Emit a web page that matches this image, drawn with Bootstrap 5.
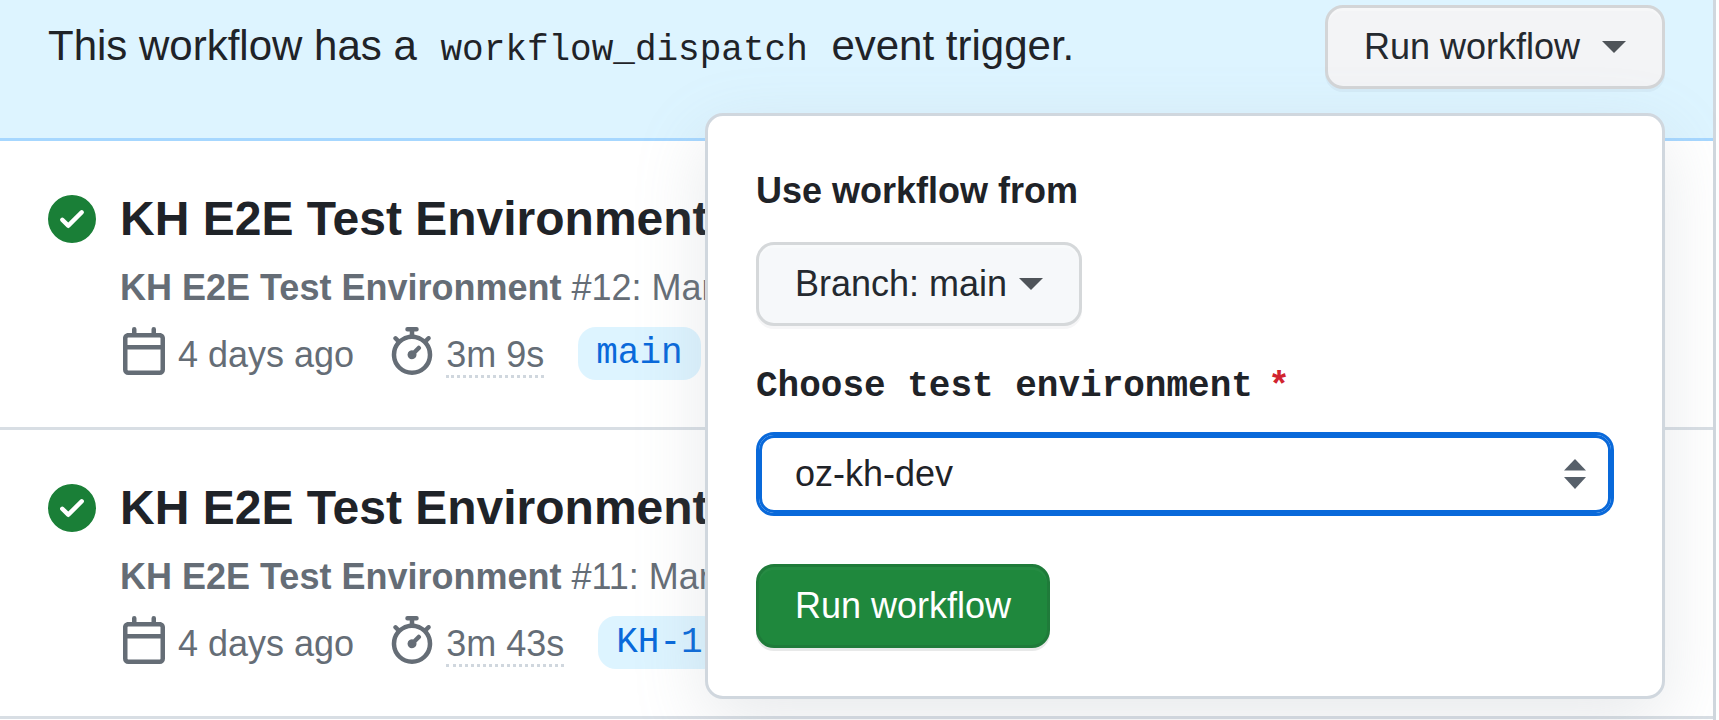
<!DOCTYPE html>
<html lang="en">
<head>
<meta charset="utf-8">
<meta name="viewport" content="width=device-width, initial-scale=1">
<title>Workflow runs</title>
<link href="https://cdn.jsdelivr.net/npm/bootstrap@5.3.0/dist/css/bootstrap.min.css" rel="stylesheet">
<style>
  body { font-family: "Liberation Sans", Arial, sans-serif; font-size: 36px; line-height: 54px; color: #1f2328; background: #fff; height: 720px; overflow: hidden; }
  .mono { font-family: "Liberation Mono", monospace; }
  .runs-box { width: 1716px; height: 720px; border-right: 3px solid #d0d7de; }
  .banner { height: 141px; padding: 5px 48px 0; background: #ddf4ff; border-bottom: 3px solid #a6d7ff; }
  .banner-text { font-size: 42px; line-height: 63px; padding-top: 9px; }
  .banner-text code { font-size: 36px; padding: 0 12px; color: inherit; }
  .gh-btn { height: 84px; padding: 0 36px; font-size: 36px; line-height: 78px; border: 3px solid #d5d8da; border-radius: 18px; background: #f6f8fa; color: #24292f; box-shadow: 0 3px 0 rgba(31,35,40,.04), inset 0 3px 0 rgba(255,255,255,.25); }
  .gh-btn-open { background: #f3f4f6; border-color: #d3d5d7; }
  .gh-btn-main { color: #fff; background: #1f883d; border-color: #1f7b3a; box-shadow: 0 3px 0 rgba(31,35,40,.1), inset 0 3px 0 rgba(255,255,255,.03); }
  .tri { width: 0; height: 0; border: 12px solid transparent; border-bottom: 0; border-top-color: #4f5459; margin-left: 12px; }
  .gh-btn-open .tri { margin-left: 22px; }
  .run-menu { top: 108px; right: 0; width: 960px; height: 586px; padding: 48px; background: #fff; border: 3px solid #d0d7de; border-radius: 18px; box-shadow: 0 24px 72px rgba(140,149,159,.2); z-index: 5; }
  .branch-btn { margin-top: 24px; }
  .env-label { height: 54px; margin: 31px 0 21px; }
  .env-select { height: 84px; padding: 0 25px 0 36px; border: 3px solid #0969da; box-shadow: inset 0 0 0 3px #0969da; border-radius: 18px; }
  .tri-pair { gap: 6px; }
  .submit-btn { margin-top: 48px; }
  .run-row { height: 289px; padding: 48px 48px 0; gap: 24px; border-bottom: 3px solid #d8dee4; }
  .run-row > svg { margin-top: 6px; flex: none; }
  .run-title { font-size: 48px; line-height: 60px; margin-bottom: 12px; }
  .run-info { white-space: nowrap; }
  .run-sub, .run-meta { color: #656d76; }
  .run-meta { gap: 34px; margin-top: 12px; }
  .run-meta > span { gap: 10px; line-height: 56px; }
  .run-meta svg { flex: none; }
  .took { height: 51px; border-bottom: 3px dotted #d0d7de; }
  .run-meta > .branch-tag { height: 53px; line-height: 53px; padding: 0 18px; border-radius: 18px; background: #ddf4ff; color: #0969da; }
  .required { color: #d1242f; margin-left: 19px; font-family: "Liberation Sans", Arial, sans-serif; }
</style>
</head>
<body>
<svg class="d-none">
  <symbol id="i-check" viewBox="0 0 16 16"><path fill="#1a7f37" fill-rule="evenodd" d="M8 16A8 8 0 1 0 8 0a8 8 0 0 0 0 16Zm3.78-9.72a.751.751 0 0 0-.018-1.042.751.751 0 0 0-1.042-.018L6.75 9.19 5.28 7.72a.751.751 0 0 0-1.042.018.751.751 0 0 0-.018 1.042l2 2a.75.75 0 0 0 1.06 0Z"/></symbol>
  <symbol id="i-calendar" viewBox="0 0 16 16"><path fill="#656d76" d="M4.75 0a.75.75 0 0 1 .75.75V2h5V.75a.75.75 0 0 1 1.5 0V2h1.25c.966 0 1.75.784 1.75 1.75v10.5A1.75 1.75 0 0 1 13.25 16H2.75A1.75 1.75 0 0 1 1 14.25V3.75C1 2.784 1.784 2 2.75 2H4V.75A.75.75 0 0 1 4.75 0ZM2.5 7.5v6.75c0 .138.112.25.25.25h10.5a.25.25 0 0 0 .25-.25V7.5Zm10.75-4H2.75a.25.25 0 0 0-.25.25V6h11V3.75a.25.25 0 0 0-.25-.25Z"/></symbol>
  <symbol id="i-stopwatch" viewBox="0 0 16 16"><path fill="#656d76" d="M5.75.75A.75.75 0 0 1 6.5 0h3a.75.75 0 0 1 0 1.5h-.75v1l-.001.041a6.724 6.724 0 0 1 3.464 1.435l.007-.006.75-.75a.749.749 0 0 1 1.275.326.749.749 0 0 1-.215.734l-.75.75-.006.007a6.75 6.75 0 1 1-10.548 0L2.72 5.03l-.75-.75a.751.751 0 0 1 .018-1.042.751.751 0 0 1 1.042-.018l.75.75.007.006A6.72 6.72 0 0 1 7.25 2.541V1.5H6.5a.75.75 0 0 1-.75-.75ZM8 14.5a5.25 5.25 0 1 0-.001-10.501A5.25 5.25 0 0 0 8 14.5Zm.389-6.7 1.33-1.33a.75.75 0 1 1 1.061 1.06L9.45 8.861A1.503 1.503 0 0 1 8 10.75a1.499 1.499 0 1 1 .389-2.95Z"/></symbol>
</svg>

<main class="runs-box">
  <header class="banner d-flex justify-content-between align-items-start">
    <div class="banner-text">This workflow has a <code class="mono">workflow_dispatch</code> event trigger.</div>
    <div class="position-relative">
      <button class="gh-btn gh-btn-open d-flex align-items-center" type="button">Run workflow<span class="tri"></span></button>
      <section class="run-menu position-absolute">
        <div class="fw-bold">Use workflow from</div>
        <button class="gh-btn branch-btn d-flex align-items-center" type="button">Branch: main<span class="tri"></span></button>
        <div class="env-label mono fw-bold">Choose test environment<span class="required">*</span></div>
        <div class="env-select d-flex align-items-center justify-content-between">
          <span>oz-kh-dev</span>
          <span class="tri-pair d-flex flex-column">
            <svg class="d-block" width="22" height="12"><path d="M11 0 22 11.500H0Z" fill="#57606a"/></svg>
            <svg class="d-block" width="22" height="12"><path d="M0 0H22L11 12Z" fill="#57606a"/></svg>
          </span>
        </div>
        <button class="gh-btn gh-btn-main submit-btn" type="button">Run workflow</button>
      </section>
    </div>
  </header>

  <article class="run-row d-flex">
    <svg width="48" height="48"><use href="#i-check"/></svg>
    <div class="run-info">
      <h2 class="run-title fw-bold">KH E2E Test Environment</h2>
      <div class="run-sub"><b>KH E2E Test Environment</b> #12: Man</div>
      <div class="run-meta d-flex">
        <span class="d-flex"><svg width="48" height="48"><use href="#i-calendar"/></svg>4 days ago</span>
        <span class="d-flex"><svg width="48" height="48"><use href="#i-stopwatch"/></svg><span class="took">3m 9s</span></span>
        <span class="branch-tag mono">main</span>
      </div>
    </div>
  </article>

  <article class="run-row d-flex">
    <svg width="48" height="48"><use href="#i-check"/></svg>
    <div class="run-info">
      <h2 class="run-title fw-bold">KH E2E Test Environment</h2>
      <div class="run-sub"><b>KH E2E Test Environment</b> #11: Man</div>
      <div class="run-meta d-flex">
        <span class="d-flex"><svg width="48" height="48"><use href="#i-calendar"/></svg>4 days ago</span>
        <span class="d-flex"><svg width="48" height="48"><use href="#i-stopwatch"/></svg><span class="took">3m 43s</span></span>
        <span class="branch-tag mono">KH-1</span>
      </div>
    </div>
  </article>
</main>
<script src="https://cdn.jsdelivr.net/npm/bootstrap@5.3.0/dist/js/bootstrap.bundle.min.js"></script>
</body>
</html>
